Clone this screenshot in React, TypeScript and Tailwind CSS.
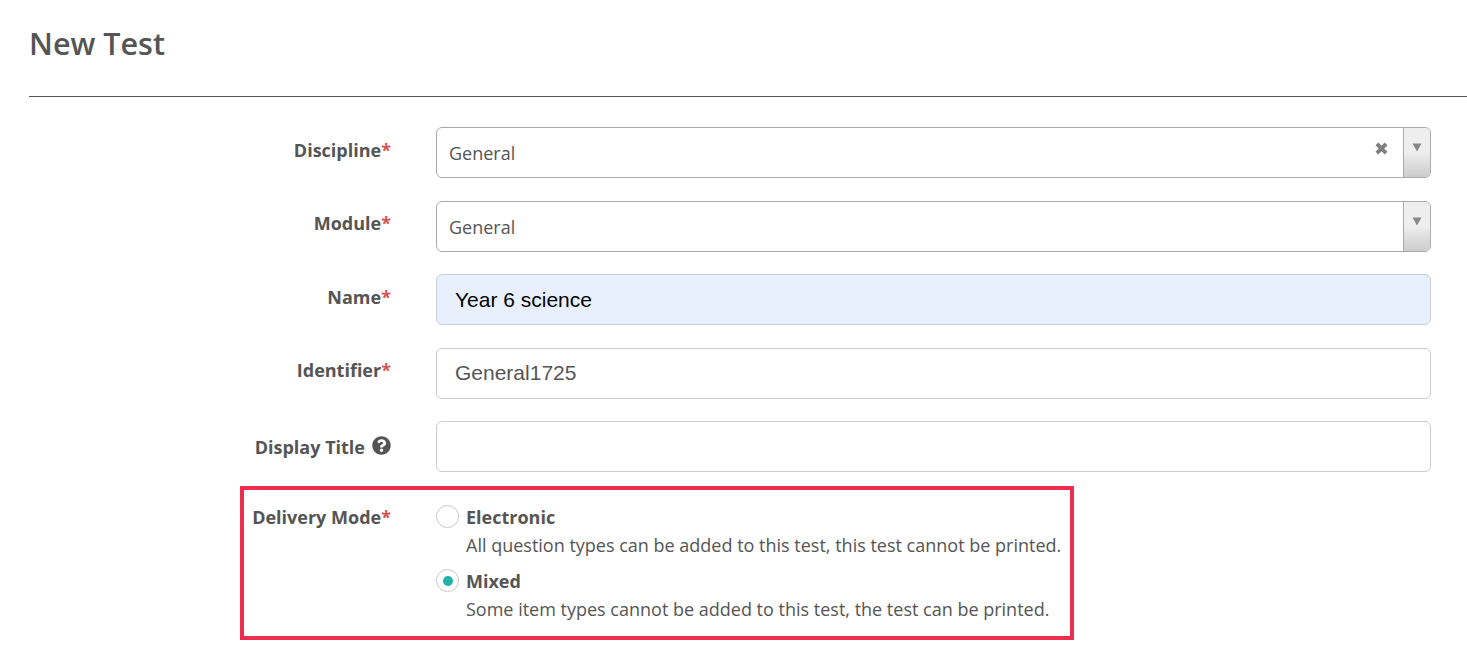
import React from "react";
import { FaQuestionCircle } from "react-icons/fa";

const Req = () => <span className="text-[#d9534f]">*</span>;

// select2 style dropdown
const SelectBox: React.FC<{ value: string; clearable?: boolean }> = ({ value, clearable }) => (
  <div className="flex h-[51px] flex-1 overflow-hidden rounded-md border border-[#aaaaaa] bg-white">
    <div className="flex flex-1 items-center justify-between pl-3 pr-[14px]">
      <span className={`text-[18px] text-[#555555] ${clearable ? "pt-[1px]" : "pt-[2px]"}`}>{value}</span>
      {clearable && (
        <svg width="15" height="15" viewBox="0 0 13 13" className="mb-[8px]">
          <path d="M2.5 2.5 L10.5 10.5 M10.5 2.5 L2.5 10.5" stroke="#808080" strokeWidth="3.4" />
        </svg>
      )}
    </div>
    <div className="flex w-[27px] justify-center border-l border-[#aaaaaa] bg-gradient-to-b from-[#eeeeee] from-50% to-[#cccccc] pt-[15px]">
      <svg width="10" height="9" viewBox="0 0 10 9">
        <path d="M0.5 0.5 H9.5 L5 8.5 Z" fill="#888888" />
      </svg>
    </div>
  </div>
);

const Row: React.FC<{ label: React.ReactNode; children: React.ReactNode; mb?: string }> = ({ label, children, mb }) => (
  <div className={`flex ${mb ?? "mb-[22.5px]"}`}>
    <div className="flex w-[391px] justify-end pt-[9.5px] text-[18px] font-bold leading-[26px] text-[#555555]">{label}</div>
    <div className="ml-[45px] flex flex-1">{children}</div>
  </div>
);

const TextBox: React.FC<{ value?: string; filled?: boolean }> = ({ value, filled }) => (
  <div
    className={`flex h-[51px] flex-1 items-center rounded-md border px-[18px] font-['Liberation_Sans',sans-serif] text-[21px] ${
      filled ? "border-[#c5d0dc] bg-[#e8f0fe] pt-[1px] text-black" : "border-[#cccccc] bg-white pb-[1px] text-[#555555]"
    }`}
  >
    {value}
  </div>
);

const Radio: React.FC<{ checked?: boolean }> = ({ checked }) => (
  <div className="flex h-[23px] w-[23px] shrink-0 items-center justify-center rounded-full border border-[#c8c8c8] bg-white">
    {checked && <div className="h-[10px] w-[10px] rounded-full bg-[#20b2aa]" />}
  </div>
);

const ModeOption: React.FC<{ title: string; desc: string; checked?: boolean }> = ({ title, desc, checked }) => (
  <div className="flex gap-[7px]">
    <Radio checked={checked} />
    <div className="text-[18px] text-[#555555]">
      <div className="h-[26px] font-bold leading-[24px]">{title}</div>
      <div className="h-[38px] whitespace-nowrap pt-[1px] leading-[26px]">{desc}</div>
    </div>
  </div>
);

export default function App() {
  return (
    <div className="h-[655px] w-[1467px] overflow-hidden bg-white pl-[29px] font-['Open_Sans',sans-serif]">
      <h1 className="flex h-[96px] items-center pb-[9px] text-[30.5px] font-semibold text-[#555555]">New Test</h1>
      <div className="h-px bg-[#555555]" />
      <div className="-ml-[29px] w-[1431px] pt-[30px]">
        <Row label={<span>Discipline<Req /></span>}>
          <SelectBox value="General" clearable />
        </Row>
        <Row label={<span>Module<Req /></span>}>
          <SelectBox value="General" />
        </Row>
        <Row label={<span>Name<Req /></span>}>
          <TextBox value="Year 6 science" filled />
        </Row>
        <Row label={<span>Identifier<Req /></span>}>
          <TextBox value="General1725" />
        </Row>
        <Row
          label={
            <span className="flex items-start gap-[7px] pt-[3px]">
              Display Title
              <FaQuestionCircle className="mt-[2px] text-[19px] text-[#555555]" />
            </span>
          }
          mb="mb-[14px]"
        >
          <TextBox />
        </Row>
        <div className="ml-[240px] flex h-[154px] w-[834px] border-4 border-[#ee2e50] pt-[15px]">
          <div className="w-[147px] whitespace-nowrap text-right text-[18px] font-bold leading-[24px] text-[#555555]">
            Delivery Mode<Req />
          </div>
          <div className="ml-[45px]">
            <ModeOption title="Electronic" desc="All question types can be added to this test, this test cannot be printed." />
            <ModeOption checked title="Mixed" desc="Some item types cannot be added to this test, the test can be printed." />
          </div>
        </div>
      </div>
    </div>
  );
}
